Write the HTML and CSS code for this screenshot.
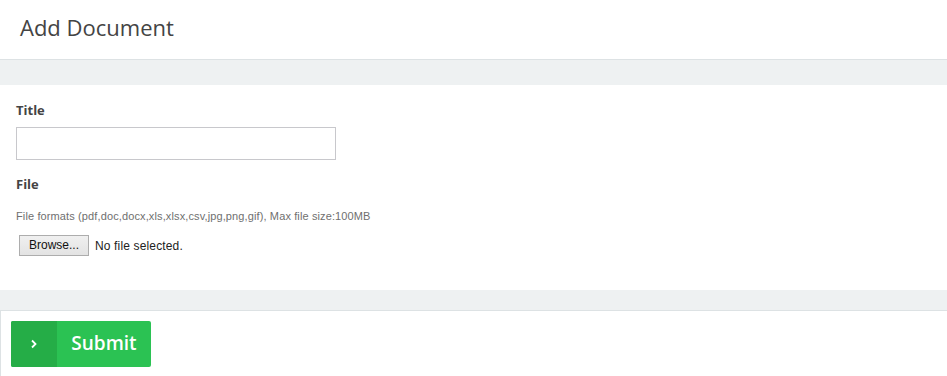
FILE: index.html
```html
<!DOCTYPE html>
<html lang="en">
<head>
  <meta charset="UTF-8">
  <meta name="viewport" content="width=device-width, initial-scale=1.0">
  <title>Add Document</title>
  <link rel="stylesheet" href="styles.css">
</head>
<body>
  <div class="page-head">
    <h1>Add Document</h1>
  </div>

  <div class="band"></div>

  <form class="panel" onsubmit="return false">
    <label class="field-label" for="title">Title</label>
    <input type="text" id="title" class="text-input">

    <label class="field-label" for="doc">File</label>
    <p class="help">File formats (pdf,doc,docx,xls,xlsx,csv,jpg,png,gif), Max file size:100MB</p>
    <div class="file-row">
      <label class="browse" for="doc">Browse...</label>
      <span class="file-name" id="fileName">No file selected.</span>
      <input type="file" id="doc" class="file-hidden">
    </div>
  </form>

  <div class="band band-small"></div>

  <div class="actions">
    <button class="submit" type="button">
      <span class="submit-icon">
        <svg width="8" height="10" viewBox="0 0 8 10"><path d="M2 1.5 L5.5 5 L2 8.5" fill="none" stroke="#fff" stroke-width="1.8"/></svg>
      </span>
      <span class="submit-text">Submit</span>
    </button>
  </div>

  <script>
    document.getElementById('doc').onchange = function () {
      var f = this.files[0];
      document.getElementById('fileName').textContent = f ? f.name : 'No file selected.';
    };
  </script>
</body>
</html>
```

FILE: styles.css
```css
body { margin: 0; font-family: "Open Sans", Arial, sans-serif; color: #444; background: #fff; }
.page-head { height: 59px; border-bottom: 1px solid #dde2e4; padding: 0 20px; display: flex; align-items: center; }
.page-head h1 { margin: 0; font-size: 22px; font-weight: 400; color: #444; position: relative; top: -3px; }
.band { height: 25px; background: #eef1f2; }
.band-small { height: 20px; }
.panel { background: #fff; border-radius: 3px; padding: 16px 16px 1px; height: 188px; display: flex; flex-direction: column; align-items: flex-start; }
.field-label { font-size: 13px; font-weight: 700; color: #444; line-height: 18px; }
.text-input { width: 320px; height: 33px; box-sizing: border-box; border: 1px solid #c8c8cc; margin: 8px 0 15px; padding: 4px 8px; font-size: 13px; }
.help { margin: 16px 0 0; font-family: "Liberation Sans", Arial, sans-serif; font-size: 11px; letter-spacing: 0.12px; color: #6f6f6f; line-height: 14px; }
.file-row { display: flex; align-items: center; margin-top: 12px; padding-left: 3px; font-family: "Liberation Sans", Arial, sans-serif; font-size: 12px; }
.browse { display: inline-block; width: 70px; height: 21px; box-sizing: border-box; border: 1px solid #adadad; background: linear-gradient(#f0f0f0, #e3e3e3); text-align: center; line-height: 19px; color: #111; cursor: pointer; }
.file-name { margin-left: 6px; color: #222; letter-spacing: 0.15px; }
.file-hidden { display: none; }
.actions { border-top: 1px solid #dde2e4; border-left: 1px solid #dde2e4; padding: 10px 10px; height: 45px; }
.submit { display: flex; padding: 0; border: none; border-radius: 2px; overflow: hidden; background: #2bc253; height: 46px; width: 140px; cursor: pointer; font-family: "Open Sans", Arial, sans-serif; }
.submit-icon { width: 46px; height: 46px; background: #25ad47; display: flex; align-items: center; justify-content: center; }
.submit-text { flex: 1; display: flex; align-items: center; justify-content: center; color: #fff; font-size: 19px; font-weight: 600; padding-bottom: 2px; }
```
